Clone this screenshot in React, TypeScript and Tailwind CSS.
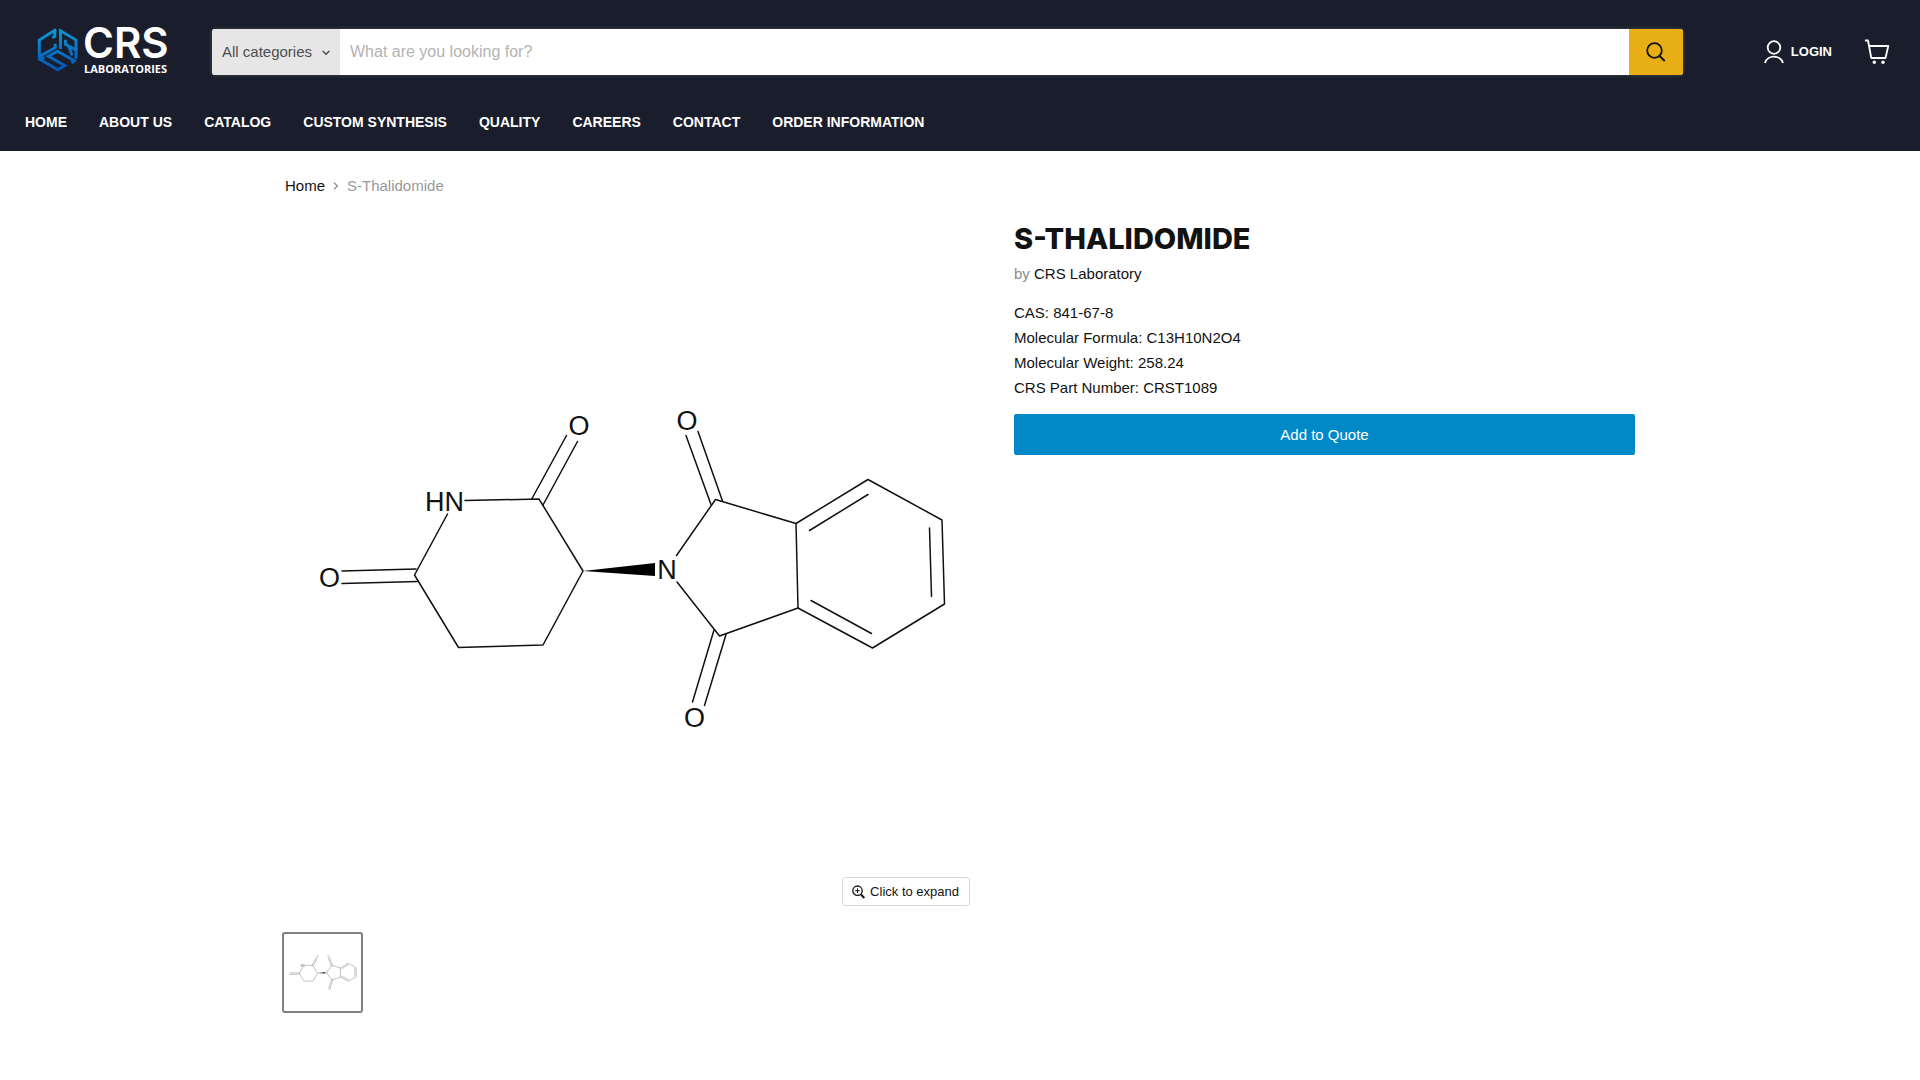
import React from "react";

const navItems = [
  "HOME",
  "ABOUT US",
  "CATALOG",
  "CUSTOM SYNTHESIS",
  "QUALITY",
  "CAREERS",
  "CONTACT",
  "ORDER INFORMATION",
];

const details = [
  "CAS: 841-67-8",
  "Molecular Formula: C13H10N2O4",
  "Molecular Weight: 258.24",
  "CRS Part Number: CRST1089",
];

function HexMark() {
  return (
    <svg viewBox="52 48 124 138" className="h-[46px] w-[41px]" fill="none" aria-hidden="true">
      <defs>
        <linearGradient id="hex" gradientUnits="userSpaceOnUse" x1="100" y1="50" x2="110" y2="184">
          <stop offset="0" stopColor="#0a9bd8" />
          <stop offset="1" stopColor="#0650b4" />
        </linearGradient>
      </defs>
      <g stroke="url(#hex)" strokeWidth="9">
        <path d="M106 56 V76 L98 80 M110 55 L59 87 V137 L107 110 V98" />
        <path d="M123 114 V59 L170 87 V117 L138 100 V86" />
        <path d="M148 106 L158 134 M170 112 V144" />
        <path d="M156 156 L165 150 L114 121 L86 136 L136 164 L115 177 L62 146 L74 139" />
      </g>
    </svg>
  );
}

function Logo() {
  return (
    <a href="#" aria-label="CRS Laboratories" className="flex w-[133px] items-center gap-[5px] pb-1 text-white">
      <HexMark />
      <span className="flex flex-col pb-[2px]">
        <span className="font-['Inter'] text-[42px] font-semibold leading-10">CRS</span>
        <span className="pl-px font-['Open_Sans'] text-[11px] font-bold leading-3">LABORATORIES</span>
      </span>
    </a>
  );
}

function Molecule({ className, viewBox }: { className: string; viewBox: string }) {
  return (
    <svg viewBox={viewBox} className={className} role="img" aria-label="S-Thalidomide structure">
      <g stroke="currentColor" fill="none" strokeLinejoin="round" strokeLinecap="round">
        <path d="M465 500.500 L539 499 L583 571 L543 645 L458.500 647.500 L414.500 575 L447.500 514" />
        <path d="M532 498.500 L566.500 435.500 M543 505 L577.500 441.500" />
        <path d="M342 571 L416 569 M342 583.500 L418 581.500" />
        <path d="M676.500 555.500 L715.500 499.500 L796 523.500 L798 608 L719.500 636 L677 582" />
        <path d="M711 504.500 L686 435.500 M722.500 501 L698 431.500" />
        <path d="M714 630 L692.500 702 M726 634.500 L704.500 705.500" />
        <path d="M796 523.500 L868 479.500 L942 520 L944.500 604 L872.500 648 L798 608" />
        <path d="M809.500 530.500 L868 494.500 M929.500 528 L931.500 596.500 M811 600.500 L871.500 633.500" />
      </g>
      <path d="M583 571 L655 563 V576 Z" fill="#000" />
      <g className="font-['Liberation_Sans']" fontSize="27" fill="currentColor" textAnchor="middle">
        <text x="579" y="435">O</text>
        <text x="444.500" y="511">HN</text>
        <text x="329.500" y="587">O</text>
        <text x="687" y="430">O</text>
        <text x="667" y="579">N</text>
        <text x="694.500" y="727">O</text>
      </g>
    </svg>
  );
}

function Header() {
  return (
    <header className="bg-[#1a1d2b] text-white">
      <div className="flex h-[104px] items-center pl-[37px] pr-[30px]">
        <Logo />
        <form className="ml-[42px] flex h-[46px] flex-1 overflow-hidden rounded-[3px] bg-white shadow-[0_0_4px_rgba(255,255,255,0.2)]">
          <div className="relative flex bg-[#e6e6e6] text-[#4d4d4d]">
            <select
              aria-label="Category"
              className="w-32 appearance-none bg-transparent pl-[10px] text-[15px] outline-none"
            >
              <option>All categories</option>
            </select>
            <svg viewBox="0 0 8 6" className="pointer-events-none absolute right-[10px] top-[21px] h-[6px] w-2" fill="none" stroke="#4d4d4d" strokeWidth="1.500" aria-hidden="true">
              <path d="M.7 1 4 4.300 7.300 1" />
            </svg>
          </div>
          <input
            type="text"
            aria-label="Search"
            placeholder="What are you looking for?"
            className="min-w-0 flex-1 bg-white px-[10px] text-base text-black outline-none placeholder:text-[#b3b3b3]"
          />
          <button type="submit" aria-label="Search" className="flex w-[54px] items-center justify-center bg-[#e7ae16]">
            <svg viewBox="0 0 20 20" className="size-5" fill="none" stroke="#111" strokeWidth="1.800" aria-hidden="true">
              <circle cx="8.500" cy="8.500" r="7.300" />
              <path d="M12.800 13.300 18.700 19" strokeWidth="2" />
            </svg>
          </button>
        </form>
        <a href="#" className="ml-[81px] flex items-center gap-[7px] text-[13px] font-bold">
          <svg viewBox="0 0 20 24" className="h-6 w-5" fill="none" stroke="#fff" strokeWidth="1.800" aria-hidden="true">
            <circle cx="10" cy="7.500" r="6.300" />
            <path d="M1 23 C3 14.500 17 14.500 19 23" />
          </svg>
          LOGIN
        </a>
        <a href="#" aria-label="Cart" className="ml-8">
          <svg viewBox="0 0 26 26" className="size-[26px]" fill="none" stroke="#fff" strokeWidth="1.800" strokeLinejoin="round" aria-hidden="true">
            <path d="M1 1.500 H4 L7.300 19 H21.500 L24.300 7 H5" />
            <circle cx="10.300" cy="23.300" r="1.700" fill="#fff" stroke="none" />
            <circle cx="19" cy="23.300" r="1.700" fill="#fff" stroke="none" />
          </svg>
        </a>
      </div>
      <nav aria-label="Main" className="flex h-[47px] items-start gap-8 px-[25px] pt-2">
        {navItems.map((item) => (
          <a key={item} href="#" className="text-sm font-bold">
            {item}
          </a>
        ))}
      </nav>
    </header>
  );
}

export default function App() {
  return (
    <div className="min-h-screen bg-white font-['Liberation_Sans',Arial,sans-serif] text-[15px] text-[#121212]">
      <Header />
      <main className="mx-auto max-w-[1350px]">
        <nav aria-label="Breadcrumb" className="flex items-center pt-6 leading-[22px]">
          <a href="#">Home</a>
          <svg viewBox="0 0 6 8" className="mx-2 h-2 w-[6px]" fill="none" stroke="#8c8c8c" strokeWidth="1.200" aria-hidden="true">
            <path d="M1 .7 4.500 4 1 7.300" />
          </svg>
          <span className="text-[#999]">S-Thalidomide</span>
        </nav>
        <div className="mt-[23px] flex items-start gap-11">
          <section aria-label="Product images" className="flex-1">
            <div className="relative">
              <Molecule viewBox="285 220 685 685" className="block aspect-square w-full stroke-[1.5px] text-[#111] [&_text]:stroke-[0.5px]" />
              <button className="absolute -bottom-px right-0 flex h-[29px] items-center gap-[5px] rounded-[3px] border border-[#d9d9d9] bg-white px-[10px] pl-[9px] text-[13px]">
                <svg viewBox="0 0 13 14" className="h-[14px] w-[13px]" fill="none" stroke="#121212" strokeWidth="1.300" aria-hidden="true">
                  <circle cx="5.500" cy="5.700" r="4.700" />
                  <path d="M9 9.500 12.300 13" strokeWidth="2" />
                  <path d="M3.200 5.700 H7.800 M5.500 3.400 V8" strokeWidth="1" />
                </svg>
                Click to expand
              </button>
            </div>
            <button aria-label="Show image 1" className="-ml-[3px] mt-[27px] block size-[81px] rounded-[3px] border-2 border-[#808080] bg-white">
              <Molecule viewBox="272 208 716 716" className="block size-full stroke-[4px] text-[#777] [&_text]:stroke-none" />
            </button>
          </section>
          <section aria-label="Product details" className="w-[46%]">
            <h1 className="pt-px font-['Inter'] text-[29px] font-extrabold leading-9">S-THALIDOMIDE</h1>
            <p className="mt-[6px] leading-[22px] text-[#8c8c8c]">
              by <a href="#" className="text-[#121212]">CRS Laboratory</a>
            </p>
            <div className="mt-[15px] leading-[25px]">
              {details.map((line) => (
                <p key={line}>{line}</p>
              ))}
            </div>
            <button className="mt-[14px] h-[41px] w-full rounded-[2px] bg-[#0088c7] pt-px text-white">Add to Quote</button>
          </section>
        </div>
      </main>
    </div>
  );
}
